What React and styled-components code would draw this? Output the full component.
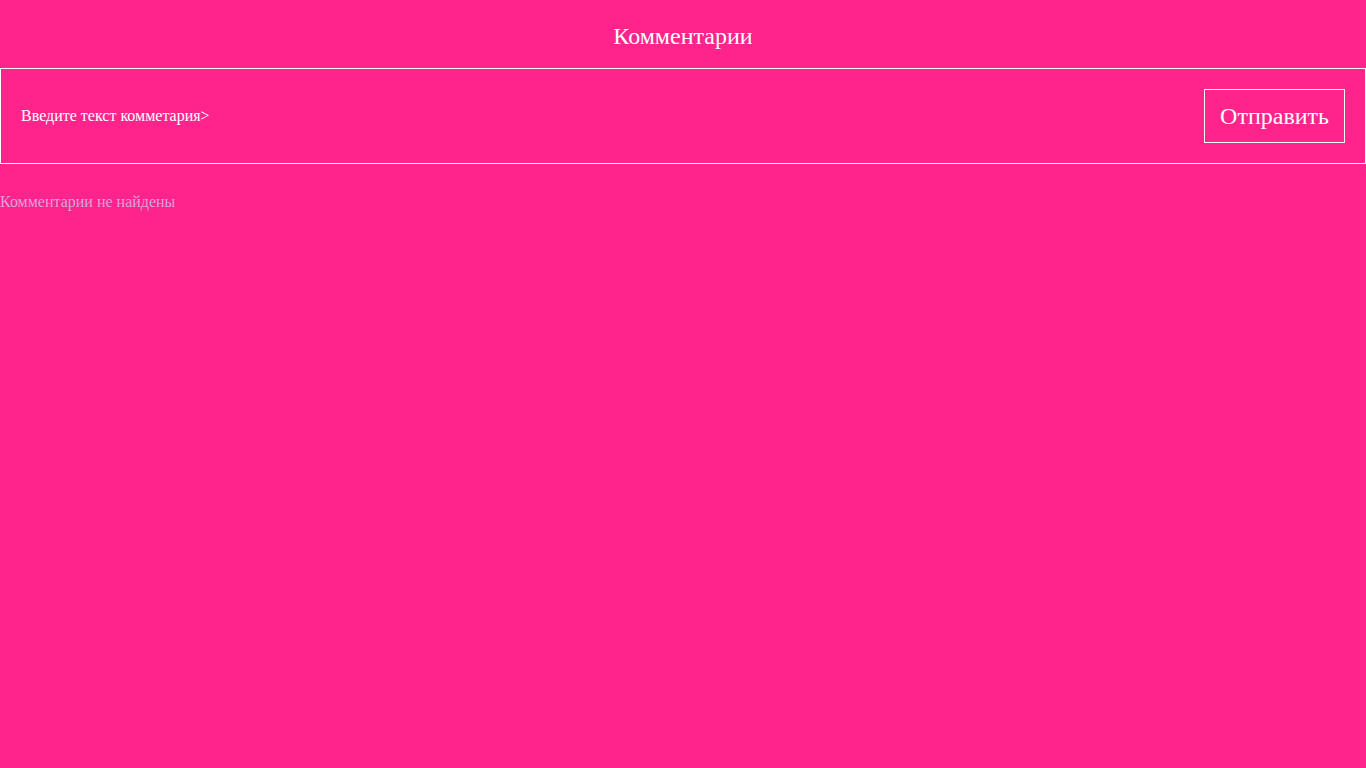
import React from "react";
import styled, { createGlobalStyle } from "styled-components";

const Global = createGlobalStyle`
  html, body { margin: 0; padding: 0; background: #ff238c; }
  body { font-family: "Liberation Serif", "Times New Roman", serif; min-height: 100vh; }
`;

const Page = styled.div`
  background: #ff238c;
  min-height: 100vh;
  color: #fff;
`;

const Header = styled.header`
  height: 68px;
  display: flex;
  align-items: center;
  justify-content: center;
`;

const Title = styled.h1`
  margin: 0;
  font-size: 24px;
  font-weight: 400;
  color: #fff;
  padding-top: 4px;
`;

const Form = styled.form`
  display: flex;
  align-items: center;
  justify-content: space-between;
  border: 1px solid #fff;
  padding: 20px;
`;

const Input = styled.input`
  flex: 1;
  background: transparent;
  border: none;
  outline: none;
  font-family: "Liberation Serif", serif;
  font-size: 16px;
  color: #fff;
  padding: 0;
  &::placeholder { color: #fff; opacity: 1; }
`;

const Button = styled.button`
  background: transparent;
  border: 1px solid #fff;
  color: #fff;
  font-family: "Liberation Serif", serif;
  font-size: 24px;
  height: 54px;
  padding: 0 15px;
  cursor: pointer;
`;

const Empty = styled.p`
  margin: 29px 0 0;
  font-size: 16px;
  color: #dda0dd;
`;

export default function App() {
  return (
    <Page>
      <Global />
      <Header>
        <Title>Комментарии</Title>
      </Header>
      <Form onSubmit={(e) => e.preventDefault()}>
        <Input placeholder="Введите текст комметария>" />
        <Button type="submit">Отправить</Button>
      </Form>
      <Empty>Комментарии не найдены</Empty>
    </Page>
  );
}
